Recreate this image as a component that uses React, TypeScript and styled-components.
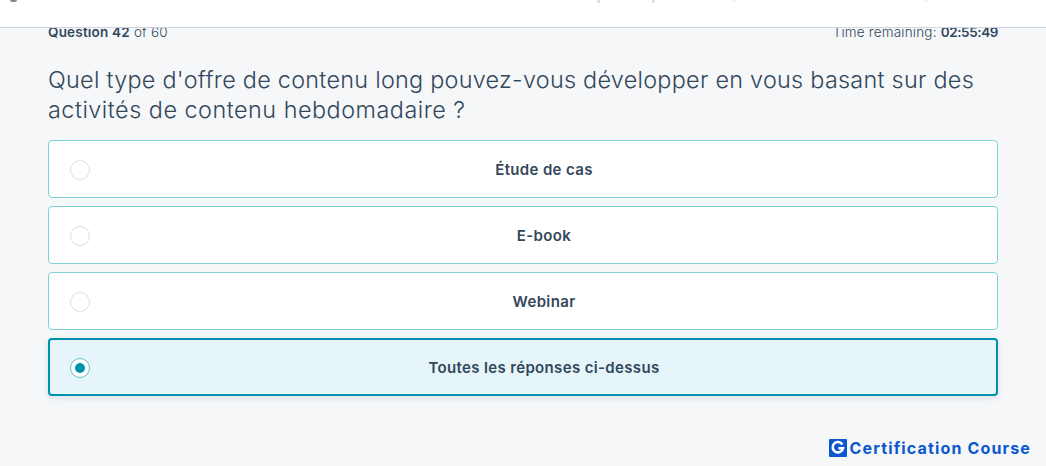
import styled, { createGlobalStyle } from "styled-components";

const GlobalStyle = createGlobalStyle`
  html, body {
    margin: 0;
    padding: 0;
    height: 100%;
    overflow: hidden;
    background-color: #f5f7f9;
    font-family: "Inter", "Liberation Sans", sans-serif;
    color: #33475b;
  }
`;

const Page = styled.div`
  width: 1046px;
  height: 466px;
  display: flex;
  flex-direction: column;
  overflow: hidden;
`;

const Header = styled.header`
  height: 27px;
  flex-shrink: 0;
  display: flex;
  align-items: flex-start;
  padding-left: 10px;
  background-color: #fff;
  border-bottom: 1px solid #cbd6e2;
`;

const LogoStub = styled.div`
  width: 7px;
  height: 2px;
  border-radius: 0 0 4px 4px;
  background-color: #7c8a99;
`;

const Tabs = styled.div`
  display: flex;
  margin-left: 580px;
`;

const Tab = styled.div<{ $width: number; $thick?: boolean }>`
  width: ${(props) => props.$width}px;
  height: ${(props) => (props.$thick ? 3 : 2)}px;
  border-left: ${(props) => (props.$thick ? 3 : 1)}px solid
    ${(props) => (props.$thick ? "#d5e1ee" : "#d5dde5")};
`;

const Main = styled.main`
  flex: 1;
  display: flex;
  flex-direction: column;
  padding: 0 48px;
`;

const Meta = styled.div`
  height: 13px;
  display: flex;
  justify-content: space-between;
  align-items: flex-end;
  overflow: hidden;
  font-size: 13.5px;
  line-height: 17px;
  font-weight: 300;
  letter-spacing: 0.2px;
  b {
    font-weight: 600;
  }
`;

const Timer = styled.b`
  letter-spacing: -0.4px;
`;

const Question = styled.h1`
  margin: 24px 0 15px;
  font-size: 23.4px;
  line-height: 30px;
  font-weight: 300;
  letter-spacing: 0.27px;
`;

const QuestionLine = styled.span<{ $spacing?: number }>`
  display: block;
  letter-spacing: ${(props) => props.$spacing ?? 0.27}px;
`;

const Options = styled.div`
  display: flex;
  flex-direction: column;
  gap: 8px;
`;

const Option = styled.div<{ $selected?: boolean }>`
  height: 58px;
  box-sizing: border-box;
  position: relative;
  display: flex;
  align-items: center;
  justify-content: center;
  padding-left: 42px;
  border-radius: 4px;
  border: ${(props) =>
    props.$selected ? "2px solid #0091ae" : "1px solid #7fd1de"};
  background-color: ${(props) => (props.$selected ? "#e5f5f9" : "#fff")};
  box-shadow: ${(props) =>
    props.$selected ? "0 2px 6px rgba(45, 62, 80, 0.12)" : "none"};
  font-size: 15px;
  font-weight: 600;
  letter-spacing: 0.35px;
`;

const Radio = styled.span<{ $selected?: boolean }>`
  position: absolute;
  left: ${(props) => (props.$selected ? 20 : 21)}px;
  top: calc(50% + 1px);
  transform: translateY(-50%);
  width: 20px;
  height: 20px;
  box-sizing: border-box;
  display: flex;
  align-items: center;
  justify-content: center;
  border-radius: 50%;
  border: 1.5px solid ${(props) => (props.$selected ? "#5fbfd2" : "#d6dfe9")};
  background-color: #fff;
  &::after {
    content: "";
    display: ${(props) => (props.$selected ? "block" : "none")};
    width: 10px;
    height: 10px;
    border-radius: 50%;
    background-color: #0091ae;
  }
`;

const Footer = styled.footer`
  margin-top: auto;
  height: 27px;
  display: flex;
  align-items: flex-start;
  justify-content: flex-end;
  gap: 3px;
  padding-right: 15px;
  color: #0b57d0;
  font-size: 16px;
  line-height: 18px;
  font-weight: 700;
  letter-spacing: 1.15px;
`;

const Logo = styled.svg`
  width: 18px;
  height: 18px;
  flex-shrink: 0;
`;

const options = [
  "Étude de cas",
  "E-book",
  "Webinar",
  "Toutes les réponses ci-dessus",
];

const App = () => {
  return (
    <Page>
      <GlobalStyle />
      <Header>
        <LogoStub />
        <Tabs>
          <Tab $width={52} $thick />
          <Tab $width={79} $thick />
          <Tab $width={191} />
          <Tab $width={2} />
        </Tabs>
      </Header>
      <Main>
        <Meta>
          <span>
            <b>Question 42</b> of 60
          </span>
          <span>
            Time remaining: <Timer>02:55:49</Timer>
          </span>
        </Meta>
        <Question>
          <QuestionLine>
            Quel type d'offre de contenu long pouvez-vous développer en vous
            basant sur des
          </QuestionLine>
          <QuestionLine $spacing={0.5}>
            activités de contenu hebdomadaire ?
          </QuestionLine>
        </Question>
        <Options>
          {options.map((o, i) => (
            <Option key={o} $selected={i === 3}>
              <Radio $selected={i === 3} />
              {o}
            </Option>
          ))}
        </Options>
      </Main>
      <Footer>
        <Logo viewBox="0 0 18 18">
          <rect width="18" height="18" rx="1" fill="#0b57d0" />
          <path
            d="M13.4 5.6A5.2 5.2 0 1 0 14 9.2H9.4"
            fill="none"
            stroke="#fff"
            strokeWidth="2.6"
          />
        </Logo>
        Certification Course
      </Footer>
    </Page>
  );
};

export default App;
